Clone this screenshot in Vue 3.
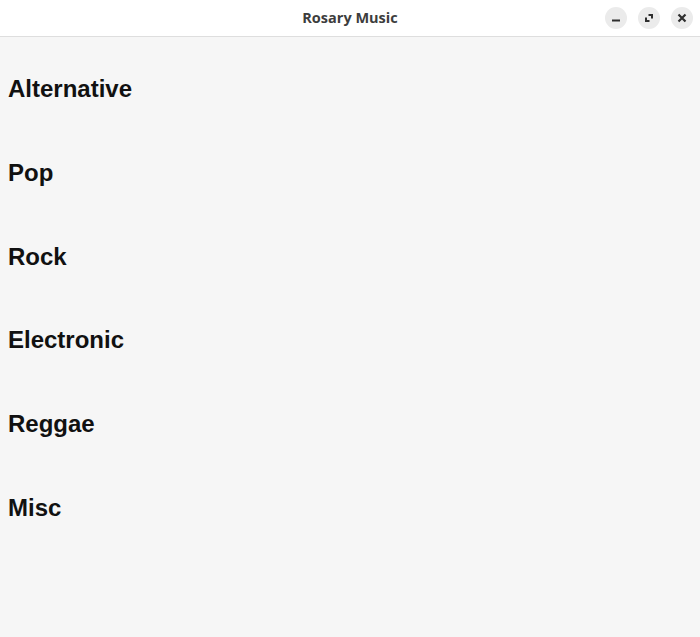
<template>
  <div class="window">
    <header class="titlebar">
      <span class="title">Rosary Music</span>
      <div class="controls">
        <button class="win-btn" aria-label="Minimize">
          <svg width="16" height="16" viewBox="0 0 16 16"><rect x="4" y="9.500" width="8" height="2" fill="#2e2e2e" /></svg>
        </button>
        <button class="win-btn" aria-label="Maximize">
          <svg width="16" height="16" viewBox="0 0 16 16">
            <path d="M7.500 4H12v4.500h-2V6H7.500z M4 7.500h2V10h2.500v2H4z" fill="#2e2e2e" />
          </svg>
        </button>
        <button class="win-btn" aria-label="Close">
          <svg width="16" height="16" viewBox="0 0 16 16">
            <path d="M4.500 4.500l7 7M11.500 4.500l-7 7" stroke="#2e2e2e" stroke-width="2.200" fill="none" />
          </svg>
        </button>
      </div>
    </header>
    <main class="genres">
      <h2 v-for="genre in genres" :key="genre" class="genre">{{ genre }}</h2>
    </main>
  </div>
</template>

<script setup>
const genres = ['Alternative', 'Pop', 'Rock', 'Electronic', 'Reggae', 'Misc']
</script>

<style scoped>
.window {
  height: 637px;
  background: #f6f6f6;
  overflow: hidden;
}

.titlebar {
  box-sizing: content-box;
  height: 34px;
  padding-bottom: 2px;
  background: #ffffff;
  border-bottom: 1px solid #dedede;
  display: flex;
  align-items: center;
  justify-content: center;
  position: relative;
}

.title {
  font-family: "Open Sans", sans-serif;
  font-weight: 700;
  font-size: 14.5px;
  color: #3d3d3d;
}

.controls {
  position: absolute;
  right: 7px;
  top: 7px;
  display: flex;
  gap: 11px;
}

.win-btn {
  width: 22px;
  height: 22px;
  padding: 0;
  border: none;
  border-radius: 50%;
  background: #ebebeb;
  display: flex;
  align-items: center;
  justify-content: center;
}

.genres {
  display: flex;
  flex-direction: column;
  gap: 55.8px;
  padding: 38px 8px 0;
}

.genre {
  margin: 0;
  font-family: "Liberation Sans", Arial, sans-serif;
  font-weight: 700;
  font-size: 24px;
  line-height: 28px;
  color: #111111;
}
</style>

<style>
html, body {
  margin: 0;
  background: #f6f6f6;
}
</style>
